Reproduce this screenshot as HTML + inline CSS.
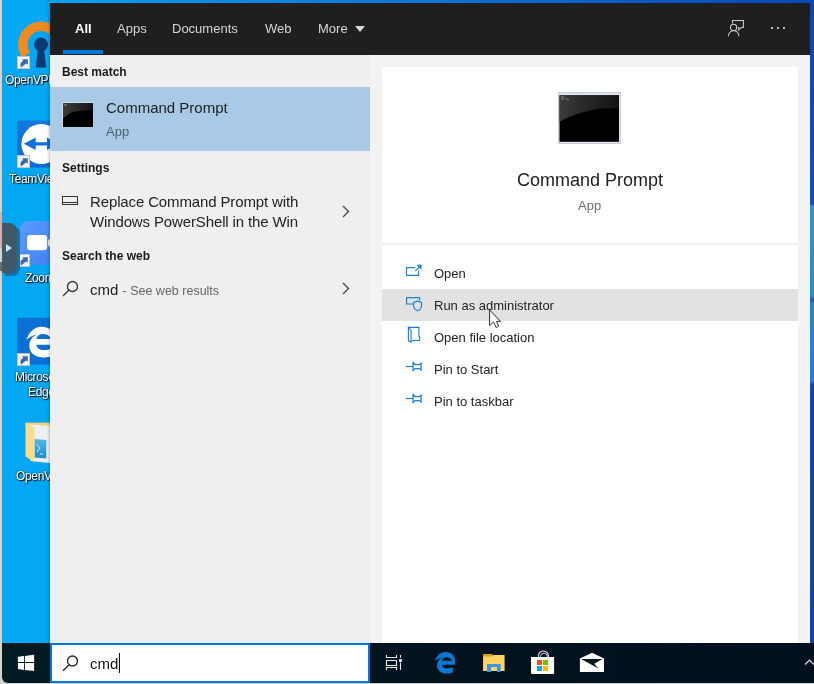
<!DOCTYPE html>
<html><head><meta charset="utf-8">
<style>
*{margin:0;padding:0;box-sizing:border-box}
html,body{width:814px;height:684px;overflow:hidden;font-family:"Liberation Sans",sans-serif}
body{position:relative;background:linear-gradient(90deg,#03a8f3 0%,#03a6f2 6%,#0a8ce0 25%,#0a74d2 54%,#0a5abe 79%,#0747b8 100%)}
.abs{position:absolute}
.t{position:absolute;white-space:nowrap;line-height:1;will-change:transform}
#edgeL{left:0;top:0;width:2px;height:684px;background:#d5d3d1}
#edgeB{left:0;top:683px;width:814px;height:1px;background:#d5d3d1}
#header{left:50px;top:3px;width:760px;height:52px;background:#1f1f1f}
#uline{left:63px;top:50px;width:40px;height:4px;background:#0078d7}
#lpane{left:50px;top:55px;width:320px;height:588px;background:#efefef}
#rpane{left:370px;top:55px;width:440px;height:588px;background:#f3f3f3}
#card{left:382px;top:67px;width:416px;height:576px;background:#fff}
#sep{left:382px;top:243px;width:416px;height:2px;background:#f0f0f0}
#hl{left:50px;top:87px;width:320px;height:64px;background:#a8cae6}
#hl2{left:382px;top:289px;width:416px;height:32px;background:#e2e2e2}
#taskbar{left:2px;top:643px;width:812px;height:40px;background:linear-gradient(90deg,#021a24 0%,#02141f 50%,#010f1f 100%);border-bottom-left-radius:6px}
#search{left:50px;top:643px;width:320px;height:40px;background:#fff;border:2px solid #0078d7}
.tab{color:#d6d6d6;font-size:13px}
.lbl{color:#1a1a1a;font-size:12px;font-weight:bold}
.blue{stroke:#1a7fd7;fill:none}
.dtxt{color:#fff;font-size:12px;letter-spacing:-0.35px;text-shadow:1px 1px 1px #000,0 0 2px rgba(0,0,0,.8)}
</style></head><body>
<div id="edgeL" class="abs"></div>
<div class="abs" style="left:0;top:212px;width:2px;height:36px;background:#d6aeac"></div>
<div class="abs" style="left:0;top:262px;width:2px;height:9px;background:#6a6a6a"></div>

<!-- desktop icons -->
<svg class="abs" style="left:2px;top:0" width="48" height="643" viewBox="2 0 48 643">
  <defs><linearGradient id="tvg" x1="0" x2="0" y1="0" y2="1"><stop offset="0" stop-color="#1577dc"/><stop offset="1" stop-color="#0d69d2"/></linearGradient>
  <linearGradient id="zmg" x1="0" x2="1" y1="0" y2="1"><stop offset="0" stop-color="#5a9cff"/><stop offset="1" stop-color="#3d7ef0"/></linearGradient>
  <linearGradient id="psg" x1="0" x2="0" y1="0" y2="1"><stop offset="0" stop-color="#4fb8e6"/><stop offset="1" stop-color="#1f8cc8"/></linearGradient></defs>
  <!-- OpenVPN -->
  <path d="M26.1 55 A18.2 18.2 0 1 1 55.9 55" stroke="#f28a22" stroke-width="9.5" fill="none"/>
  <circle cx="41" cy="44.6" r="7" fill="#0c3a70"/>
  <path d="M38 49 L44 49 L46.3 67.6 L35.7 67.6 Z" fill="#0c3a70"/>
  <!-- TeamViewer -->
  <rect x="17.3" y="120.5" width="40" height="47" rx="2" fill="url(#tvg)"/>
  <circle cx="41.3" cy="144" r="19.9" fill="#fff"/>
  <path d="M23.8 143.8 L35.7 137.5 V142.2 H47 V137.5 L58 143.8 L47 150 V145.5 H35.7 V150 Z" fill="#0e70d8"/>
  <!-- Zoom -->
  <rect x="20" y="221" width="40" height="44" rx="8" fill="url(#zmg)"/>
  <rect x="27.1" y="235" width="20" height="15.3" rx="3" fill="#fff"/>
  <path d="M48 240.5 L50 238.5 V247 L48 245.3 Z" fill="#f4f4f4"/>
  <!-- Edge -->
  <rect x="17.3" y="317.7" width="40" height="47" fill="#0b6fd4"/>
  <g transform="translate(19.3 320.8) scale(1.43)">
   <path d="M4.9 13.3 C6.5 8 10.5 4.1 15.6 4.1 C21.5 4.1 25 8 25 12.5 L25 16.8 L11.9 16.8 C12.2 19 14 20.5 17 20.5 C19 20.5 21.5 20 22.9 19.3 L22.9 24.6 C21 25.4 18.5 25.6 16.5 25.6 C10.5 25.6 7 22 7 17.5 C7 14 9 11 12 9.5 C9.5 10 7 11.5 4.9 13.3 Z" fill="#fff"/>
   <path d="M11.9 12.7 C12.3 10.5 14 9.2 16.8 9.2 C19.6 9.2 21.5 10.5 21.7 12.7 Z" fill="#0b6fd4"/>
  </g>
  <!-- folder -->
  <path d="M25.5 422.6 H50 V426 H25.5 Z" fill="#f3d27a"/>
  <path d="M30.4 424.6 L50 426 V463 L30.4 461 Z" fill="#eef1f4"/>
  <path d="M34.5 439 L46.3 440 V458.6 L34.5 457.6 Z" fill="url(#psg)"/>
  <path d="M36.5 444 L40 448 L37 452 M40 454 H43" stroke="#dff3fb" stroke-width="0.9" fill="none"/>
  <path d="M25.5 422.6 L34.5 427.5 V462.3 L25.5 456.6 Z" fill="#f8db8b"/>
</svg>
<svg class="abs" style="left:17px;top:56px" width="13" height="13"><rect x="0.5" y="0.5" width="12" height="12" fill="#f3f3f3" stroke="#c4c4c4" stroke-width="1"/><path d="M4.3 11.5 C2.8 9 3.3 6.2 6.3 5 L5.3 3.3 H10.8 V8.8 L9.3 7.5 C7.8 8.3 6.3 9.5 4.3 11.5 Z" fill="#3b66ab"/></svg>
<svg class="abs" style="left:17px;top:155px" width="13" height="13"><rect x="0.5" y="0.5" width="12" height="12" fill="#f3f3f3" stroke="#c4c4c4" stroke-width="1"/><path d="M4.3 11.5 C2.8 9 3.3 6.2 6.3 5 L5.3 3.3 H10.8 V8.8 L9.3 7.5 C7.8 8.3 6.3 9.5 4.3 11.5 Z" fill="#3b66ab"/></svg>
<svg class="abs" style="left:17px;top:254px" width="13" height="13"><rect x="0.5" y="0.5" width="12" height="12" fill="#f3f3f3" stroke="#c4c4c4" stroke-width="1"/><path d="M4.3 11.5 C2.8 9 3.3 6.2 6.3 5 L5.3 3.3 H10.8 V8.8 L9.3 7.5 C7.8 8.3 6.3 9.5 4.3 11.5 Z" fill="#3b66ab"/></svg>
<svg class="abs" style="left:17px;top:353px" width="13" height="13"><rect x="0.5" y="0.5" width="12" height="12" fill="#f3f3f3" stroke="#c4c4c4" stroke-width="1"/><path d="M4.3 11.5 C2.8 9 3.3 6.2 6.3 5 L5.3 3.3 H10.8 V8.8 L9.3 7.5 C7.8 8.3 6.3 9.5 4.3 11.5 Z" fill="#3b66ab"/></svg>
<div class="abs" style="left:2px;top:223px;width:15px;height:50px;background:#3e5a68;border-radius:0 8px 8px 0;box-shadow:3px 3px 0 #1b6ea0"></div>
<svg class="abs" style="left:6px;top:244px" width="6" height="8"><path d="M0 0 L6 4 L0 8Z" fill="#bfe8f5"/></svg>
<div class="t dtxt" style="left:5px;top:74px">OpenVPN</div>
<div class="t dtxt" style="left:9px;top:173px">TeamViewer</div>
<div class="t dtxt" style="left:25px;top:272px">Zoom</div>
<div class="t dtxt" style="left:15px;top:371px">Microsoft</div>
<div class="t dtxt" style="left:28px;top:386px">Edge</div>
<div class="t dtxt" style="left:16px;top:470px">OpenVPN</div>
<div class="abs" style="left:47px;top:0;width:3px;height:643px;background:linear-gradient(90deg,rgba(0,0,0,0),rgba(0,0,0,0.18))"></div>

<div class="abs" style="left:810px;top:0;width:4px;height:643px;background:linear-gradient(180deg,#0847b8 0px,#0a52c2 204px,#1f9adc 206px,#1a90d8 296px,#0d5cc0 300px,#1a8cd6 304px,#1686d2 381px,#0b4aad 385px,#0a48a8 643px)"></div>
<div id="header" class="abs"></div>
<div id="uline" class="abs"></div>
<div class="t tab" style="left:75px;top:22px;color:#fff;font-weight:bold">All</div>
<div class="t tab" style="left:117px;top:22px">Apps</div>
<div class="t tab" style="left:172px;top:22px">Documents</div>
<div class="t tab" style="left:265px;top:22px">Web</div>
<div class="t tab" style="left:318px;top:22px">More</div>
<svg class="abs" style="left:355px;top:26px" width="10" height="6"><path d="M0 0H10L5 6Z" fill="#d6d6d6"/></svg>
<svg class="abs" style="left:726px;top:18px" width="22" height="20" viewBox="726 18 22 20">
  <path d="M732.5 23.6 V20.5 H743.4 V27.5 H741.3 L738.8 30 V27.5 H737.8" stroke="#cfcfcf" stroke-width="1.05" fill="none"/>
  <circle cx="733.6" cy="27.4" r="3.1" stroke="#cfcfcf" stroke-width="1.05" fill="none"/>
  <path d="M728.4 36.2 A5.3 5.6 0 0 1 739 36.2" stroke="#cfcfcf" stroke-width="1.05" fill="none"/>
</svg>
<div class="abs" style="left:771px;top:27px;width:2px;height:2px;background:#b8b8b8"></div>
<div class="abs" style="left:777px;top:27px;width:2px;height:2px;background:#b8b8b8"></div>
<div class="abs" style="left:783px;top:27px;width:2px;height:2px;background:#b8b8b8"></div>

<div id="lpane" class="abs"></div>
<div id="rpane" class="abs"></div>
<div id="card" class="abs"></div>
<div id="sep" class="abs"></div>
<div id="hl" class="abs"></div>
<div id="hl2" class="abs"></div>

<!-- left pane -->
<div class="t lbl" style="left:62px;top:66px">Best match</div>
<svg class="abs" style="left:62px;top:102px" width="31" height="25" viewBox="0 0 31 25">
 <defs><linearGradient id="gs" x1="0" x2="1" y1="0" y2="0"><stop offset="0" stop-color="#3c3c3c"/><stop offset="1" stop-color="#141414"/></linearGradient></defs>
 <rect x="0" y="0" width="31" height="25" fill="#d8dde2"/>
 <rect x="1" y="1" width="30" height="24" fill="#000"/>
 <path d="M1 1 H31 V8 Q18 7.5 10 10.5 Q4 13 1 17 Z" fill="url(#gs)"/>
 <rect x="2.5" y="2.5" width="2" height="1" fill="#bbb"/>
</svg>
<div class="t" style="left:106px;top:100px;font-size:15px;color:#1e1e1e">Command Prompt</div>
<div class="t" style="left:106px;top:125px;font-size:13px;color:rgba(0,0,0,0.55)">App</div>
<div class="t lbl" style="left:62px;top:162px">Settings</div>
<svg class="abs" style="left:62px;top:196px" width="16" height="10"><rect x="0.5" y="0.5" width="15" height="8" stroke="#333" fill="none"/><line x1="1" y1="6.5" x2="15" y2="6.5" stroke="#333"/></svg>
<div class="t" style="left:90px;top:194px;font-size:15px;letter-spacing:-0.13px;color:#222">Replace Command Prompt with</div>
<div class="t" style="left:90px;top:214px;font-size:15px;letter-spacing:-0.13px;color:#222">Windows PowerShell in the Win</div>
<svg class="abs" style="left:342px;top:205px" width="8" height="13"><path d="M1 1L6.5 6.5L1 12" stroke="#444" stroke-width="1.3" fill="none"/></svg>
<div class="t lbl" style="left:62px;top:250px">Search the web</div>
<svg class="abs" style="left:62px;top:280px" width="17" height="17"><circle cx="10.5" cy="6.5" r="5" stroke="#333" stroke-width="1.3" fill="none"/><path d="M7 10L1 16" stroke="#333" stroke-width="1.3"/></svg>
<div class="t" style="left:90px;top:282px;font-size:15px;color:#222">cmd <span style="font-size:12.5px;color:#666">- See web results</span></div>
<svg class="abs" style="left:342px;top:282px" width="8" height="13"><path d="M1 1L6.5 6.5L1 12" stroke="#444" stroke-width="1.3" fill="none"/></svg>

<!-- right card -->
<svg class="abs" style="left:558px;top:92px" width="63" height="52" viewBox="0 0 63 52">
 <defs><linearGradient id="gb" x1="0" x2="1" y1="0" y2="0"><stop offset="0" stop-color="#3a3a3a"/><stop offset="1" stop-color="#121212"/></linearGradient></defs>
 <rect x="0" y="0" width="63" height="52" fill="#dfe4ea"/>
 <rect x="0.5" y="0.5" width="62" height="51" fill="none" stroke="#c8ced6"/>
 <rect x="1.5" y="3.3" width="59.5" height="46.5" fill="#000"/>
 <path d="M1.5 3.3 H61 V16.5 Q42 15.5 28 19.5 Q10 24 1.5 30 Z" fill="url(#gb)"/>
 <path d="M3 5 H6 M3 7 H6 M7 5.5 L9 7.5 H11" stroke="#999" stroke-width="0.8" fill="none"/>
</svg>
<div class="t" style="left:517px;top:171px;font-size:18px;color:#202020">Command Prompt</div>
<div class="t" style="left:578px;top:199px;font-size:13px;color:#6e6e6e">App</div>

<svg class="abs" style="left:400px;top:255px" width="30" height="160" viewBox="400 255 30 160">
  <g class="blue" stroke-width="1.15">
   <path d="M414.8 267.6 H406.5 V275.4 H418.6 V270.5"/>
   <path d="M415.3 271.2 L419.6 266.9"/><path d="M417 265 H421.2 V269.2 Z" fill="#1a7fd7" stroke-width="0.6"/>
   <path d="M413.2 304 H406.6 V297.6 H419.6 V300.6"/>
   <path d="M413.6 302.2 Q415.8 302 417.5 300.9 Q419.4 302 421.5 302.2 V305.8 Q421.2 309.2 417.5 310.7 Q413.9 309.2 413.6 305.8 Z"/>
   <path d="M408.4 327.3 H418.9 V336.2 L419.6 337 V340.5 H411.3"/>
   <path d="M408.4 327.3 V340.6 L411.1 342.3 V330.6 Z"/>
   <path d="M406 366.5 H413"/><path d="M413.1 362.5 L415.2 364.5 H419.2 L421.1 363.2 V369.9 L419.2 368.5 H415.2 L413.1 370.5 Z" stroke-width="1.25"/>
   <path d="M406 398.5 H413"/><path d="M413.1 394.5 L415.2 396.5 H419.2 L421.1 395.2 V401.9 L419.2 400.5 H415.2 L413.1 402.5 Z" stroke-width="1.25"/>
  </g>
</svg>
<div class="t" style="left:434px;top:267px;font-size:13px;color:#222">Open</div>
<div class="t" style="left:434px;top:299px;font-size:13px;color:#222">Run as administrator</div>
<div class="t" style="left:434px;top:331px;font-size:13px;color:#222">Open file location</div>
<div class="t" style="left:434px;top:363px;font-size:13px;color:#222">Pin to Start</div>
<div class="t" style="left:434px;top:395px;font-size:13px;color:#222">Pin to taskbar</div>
<!-- cursor -->
<svg class="abs" style="left:489px;top:309px" width="13" height="20"><path d="M0.6 0.9 V16.6 L4.6 13 L7.1 18.5 L9.6 17.2 L7.6 12.4 H11.5 Z" fill="#fff" stroke="#2a2a2a" stroke-width="1" stroke-linejoin="round"/></svg>

<!-- taskbar -->
<div class="abs" style="left:0;top:660px;width:20px;height:24px;background:#d5d3d1"></div>
<div id="taskbar" class="abs"></div>
<div id="search" class="abs"></div>
<svg class="abs" style="left:17px;top:654px" width="18" height="18"><path d="M0.9 2.8 L7 2 V8 H0.9Z M7.9 1.9 L17.1 0.8 V8 H7.9Z M0.9 9 H7 V15.9 L0.9 14.9Z M7.9 9 H17.1 V17 L7.9 15.9Z" fill="#fff"/></svg>
<svg class="abs" style="left:62px;top:655px" width="17" height="17"><circle cx="10.5" cy="6" r="5" stroke="#222" stroke-width="1.3" fill="none"/><path d="M7 9.8L1 15.8" stroke="#222" stroke-width="1.3"/></svg>
<div class="t" style="left:90px;top:656px;font-size:15px;color:#111">cmd</div>
<div class="abs" style="left:119px;top:653px;width:1px;height:20px;background:#111"></div>
<svg class="abs" style="left:384px;top:653px" width="20" height="20" viewBox="384 653 20 20">
  <g stroke="#e6e6e6" stroke-width="1.1" fill="none">
   <path d="M386.5 655 V657.5 H396.5 V655"/>
   <rect x="386.5" y="660.5" width="10" height="5"/>
   <path d="M386.5 670 V667.5 H396.5 V670"/>
   <path d="M400.5 655 V657.8 M400.5 662.5 V670"/>
  </g>
  <rect x="399.1" y="659.2" width="2.8" height="2.6" fill="#fff"/>
</svg>
<!-- edge -->
<svg class="abs" style="left:430px;top:648px" width="30" height="28" viewBox="0 0 30 28">
  <path d="M4.9 13.3 C6.5 8 10.5 4.1 15.6 4.1 C21.5 4.1 25 8 25 12.5 L25 16.8 L11.9 16.8 C12.2 19 14 20.5 17 20.5 C19 20.5 21.5 20 22.9 19.3 L22.9 24.6 C21 25.4 18.5 25.6 16.5 25.6 C10.5 25.6 7 22 7 17.5 C7 14 9 11 12 9.5 C9.5 10 7 11.5 4.9 13.3 Z" fill="#0b78d4"/>
  <path d="M11.9 12.7 C12.3 10.5 14 9.2 16.8 9.2 C19.6 9.2 21.5 10.5 21.7 12.7 Z" fill="#031620"/>
</svg>
<!-- explorer -->
<svg class="abs" style="left:482px;top:653px" width="23" height="20" viewBox="0 0 23 20">
  <path d="M1.1 1 H10 L11.3 2.3 H22.4 V18 H1.1Z" fill="#e2a20f"/>
  <path d="M1.1 3.6 H10.5 L11.8 2.1 H22.4 V17.9 H1.1Z" fill="#fcd462"/>
  <path d="M5 11 H18.7 V18.9 H15 V14 H9.1 V18.9 H5Z" fill="#3f95e0"/>
</svg>
<!-- store -->
<svg class="abs" style="left:530px;top:650px" width="25" height="25" viewBox="0 0 25 25">
  <path d="M8.4 7.5 V6 A5 5 0 0 1 18.4 6 V7.5" stroke="#f0f0f0" stroke-width="1.1" fill="none"/>
  <path d="M10.5 7.5 V6.5 Q10.5 3.2 14 3.2 Q17.3 3.2 17.3 6.5 V7.5" stroke="#e0e0e0" stroke-width="0.9" fill="none"/>
  <path d="M1 7 H24.1 V23 Q24.1 24.1 23 24.1 H2.1 Q1 24.1 1 23Z" fill="#fff"/>
  <rect x="7" y="10" width="5" height="5" fill="#f25022"/>
  <rect x="13" y="10" width="5" height="5" fill="#7fba00"/>
  <rect x="7" y="16" width="5" height="5" fill="#00a4ef"/>
  <rect x="13" y="16" width="5" height="5" fill="#ffb900"/>
</svg>
<!-- mail -->
<svg class="abs" style="left:579px;top:652px" width="26" height="21" viewBox="0 0 26 21">
  <path d="M0.9 6.4 L13.1 0.8 L25 6.4 V20 H0.9 Z" fill="#fff"/>
  <path d="M2.1 7.1 H23.6 L15.2 11.8 L19.4 16.5 Z" fill="#031620"/>
</svg>
<svg class="abs" style="left:804px;top:658px" width="10" height="8"><path d="M1 6.5 L5.5 2 L10 6.5" stroke="#ddd" stroke-width="1.2" fill="none"/></svg>
<div id="edgeB" class="abs"></div>
</body></html>
